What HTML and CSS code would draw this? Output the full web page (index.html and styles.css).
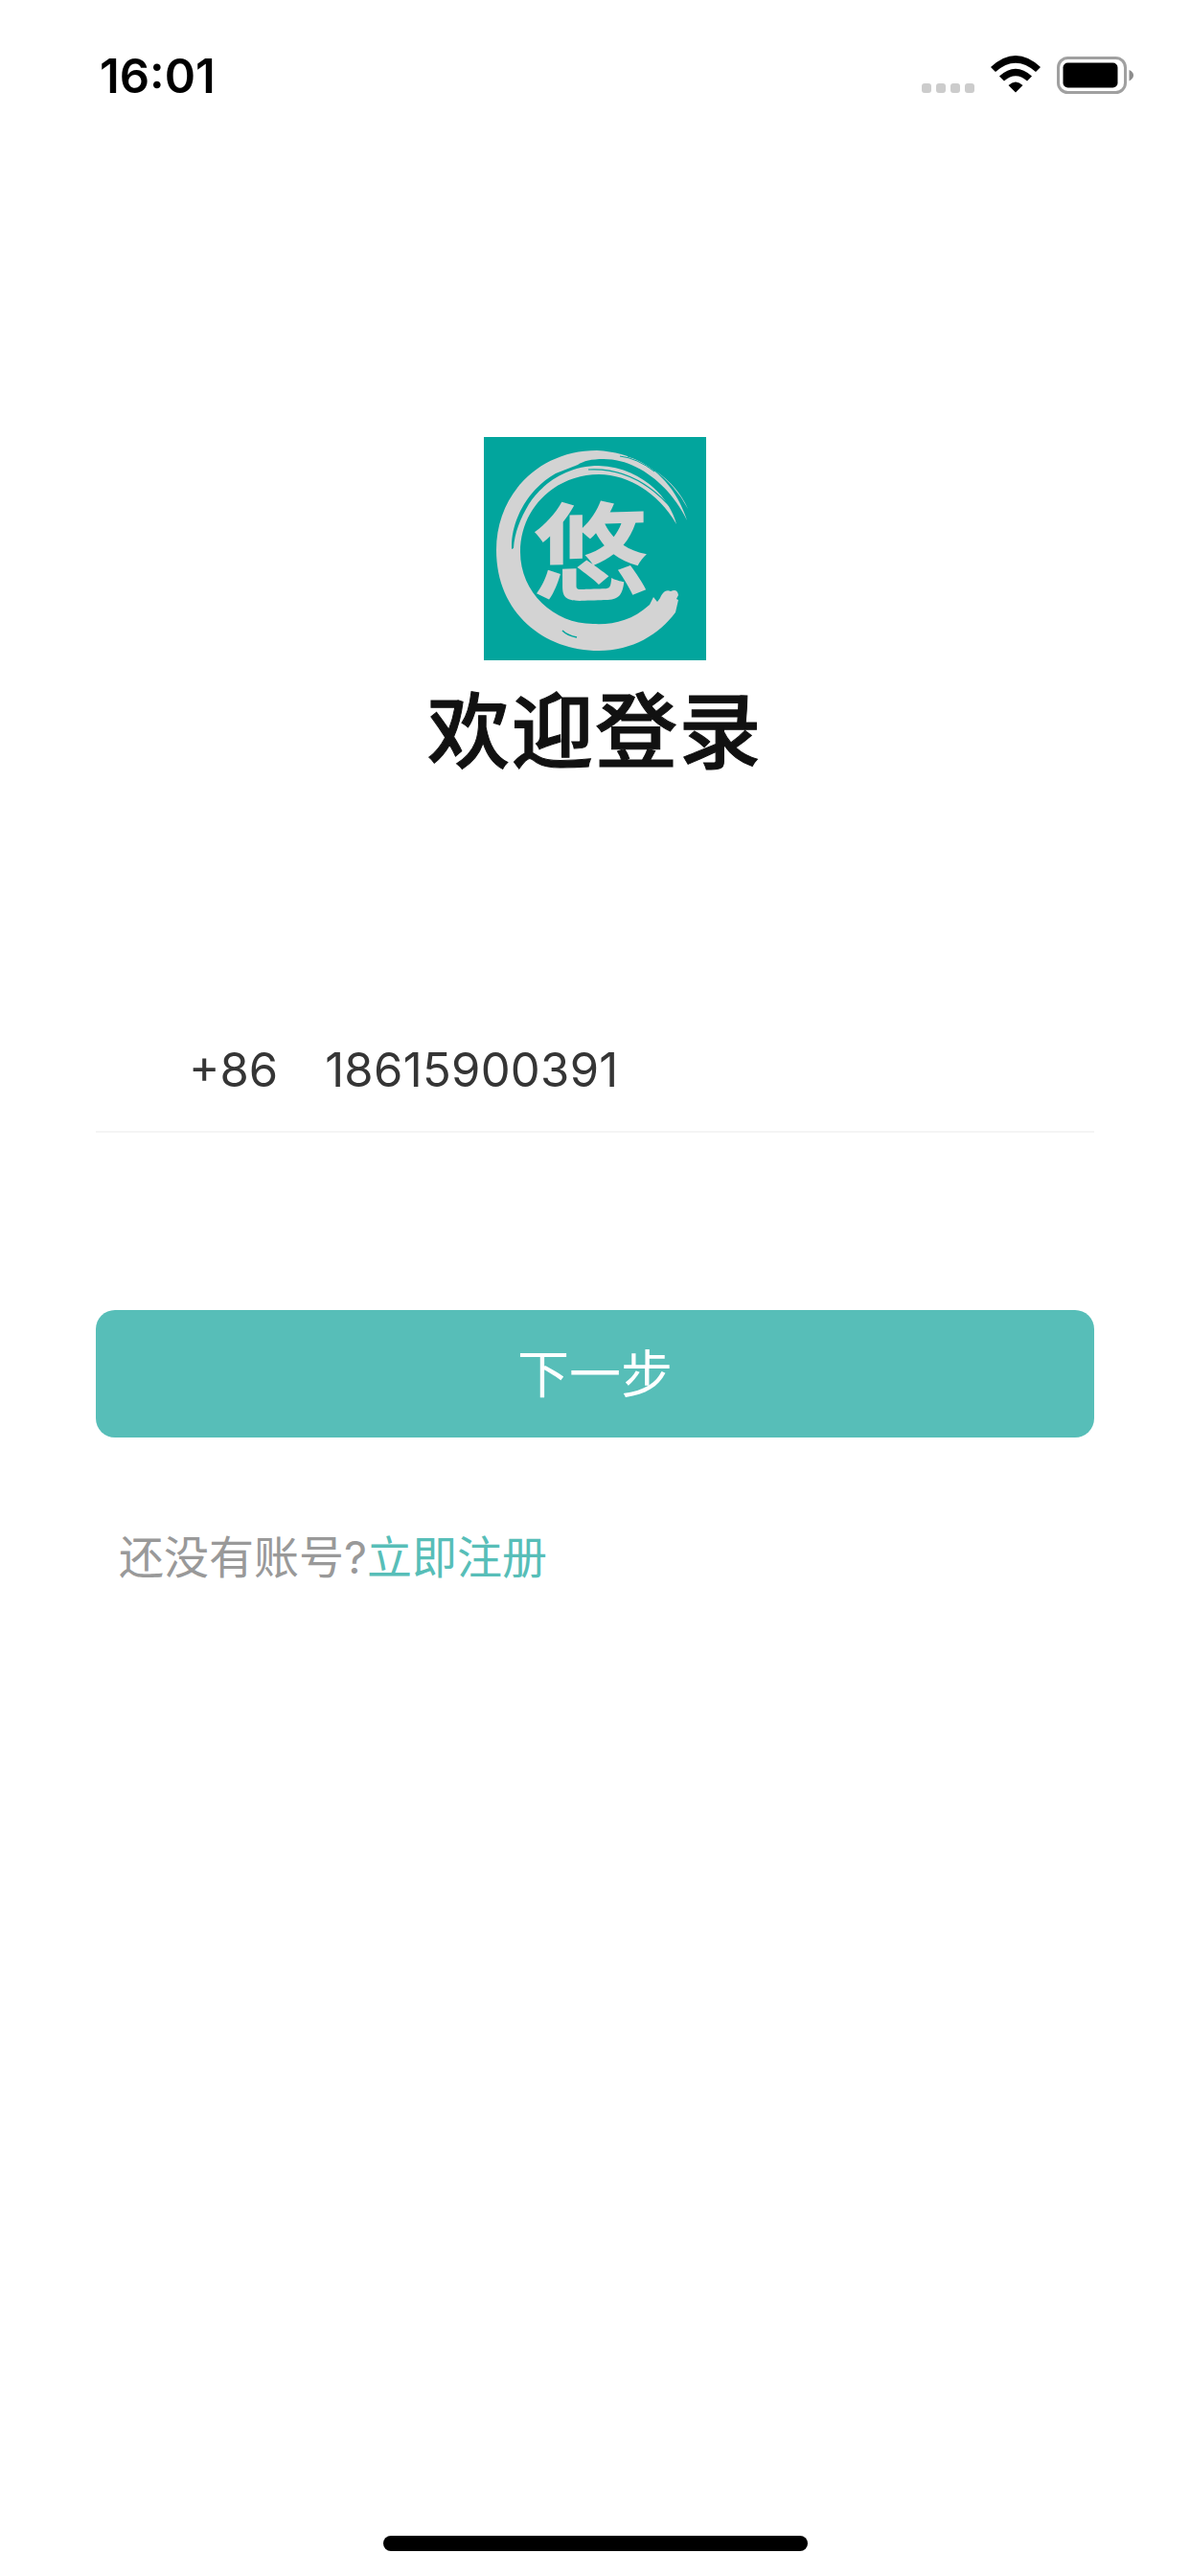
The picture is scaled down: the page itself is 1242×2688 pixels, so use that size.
FILE: index.html
```html
<!DOCTYPE html>
<html lang="zh-CN">
<head>
    <meta charset="UTF-8">
    <meta name="viewport" content="width=device-width, initial-scale=1.0">
    <title>欢迎登录</title>
    <link rel="stylesheet" href="styles.css">
</head>
<body>
    <div class="page">
        <header class="status-bar">
            <span class="time">16:01</span>
            <div class="status-icons">
                <div class="signal">
                    <i></i><i></i><i></i><i></i>
                </div>
                <svg class="wifi" width="52" height="39" viewBox="0 0 52 39">
                    <path d="M0 12Q26 -12 52 12L47 17Q26 -1.500 5 17Z"/>
                    <path d="M9 21.500Q26 6 43 21.500L38 26.500Q26 16 14 26.500Z"/>
                    <path d="M18.500 31Q26 24 33.500 31L26 38.500Z"/>
                </svg>
                <svg class="battery" width="82" height="40" viewBox="0 0 82 40">
                    <rect x="1.500" y="1.500" width="70" height="36" rx="10" fill="none" stroke="#a0a0a0" stroke-width="3"/>
                    <rect x="6.500" y="6.500" width="57" height="26" rx="5"/>
                    <path d="M75.500 14Q80 16 80 19.500T75.500 25.500Z" fill="#8c8c8c"/>
                </svg>
            </div>
        </header>

        <main class="login">
            <svg class="logo" width="232" height="233" viewBox="0 0 232 233">
                <rect width="232" height="233" fill="#02a59d"/>
                <!-- brush ring -->
                <g fill="#d3d3d3">
                    <path d="M212 87C200 50 172 17 118 14C57 14 13 60 13 118C13 184 63 223 120 223C155 223 183 206 200 183L203 170L201 169L203 165Q202 158 195 161C189 158 185 165 184 168L181 172L177 167L173 175C154 192 135 196 114 195C73 195 38 162 38 120C38 73 76 39 120 39C150 39 182 58 201 91C194 64 166 32 120 30C85 30 60 50 47 70C38 85 32 100 31 116L29 117C28 88 45 55 75 38L98 29C104 25 112 23 125 23C160 23 194 50 212 87Z"/>
                    <path d="M177 34Q200 50 213 75Q202 50 177 34Z"/>
                </g>
                <g fill="none" stroke="#02a59d">
                    <path d="M142 20Q160 22 178 36M150 20Q164 23 176 33" stroke-width="1"/>
                    <path d="M109 34Q160 31 199 78" stroke-width="1.200"/>
                    <path d="M82 202Q87 207 97 209" stroke-width="1.500"/>
                </g>
                <text class="logo-text" transform="translate(51 164) scale(1.08 1) skewY(-2)">悠</text>
            </svg>
            <h1 class="title">欢迎登录</h1>

            <form class="form">
                <div class="phone">
                    <span class="code">+86</span>
                    <span class="number">18615900391</span>
                </div>
                <button type="button" class="primary-button">下一步</button>
                <p class="register">还没有账号?<a class="link">立即注册</a></p>
            </form>
        </main>

        <div class="home-indicator"></div>
    </div>
</body>
</html>
```
FILE: styles.css
```css
:root {
  --green: #57beb8;
  --text: #353535;
  --gray: #999999;
}
* {
  box-sizing: border-box;
}
body {
  margin: 0;
  background-color: #ffffff;
  font-family: Inter, 'Noto Sans CJK SC', sans-serif;
}
.page {
  display: flex;
  flex-direction: column;
  align-items: center;
  width: 1242px;
  height: 2688px;
  padding-bottom: 26px;
}
.status-bar {
  display: flex;
  justify-content: space-between;
  width: 100%;
  height: 132px;
  padding: 50px 57px 0 104px;
}
.time {
  font-size: 49px;
  font-weight: 600;
  line-height: 60px;
}
.status-icons {
  display: flex;
  align-items: flex-start;
  padding-top: 8px;
}
.signal {
  display: flex;
  gap: 5px;
  margin: 29px 17px 0 0;
}
.signal i {
  width: 10px;
  height: 10px;
  border-radius: 3px;
  background-color: #cccccc;
}
.battery {
  margin: 1px 0 0 17px;
}
.login {
  display: flex;
  flex: 1;
  flex-direction: column;
  align-items: center;
  width: 1042px;
  padding-top: 324px;
}
.logo {
  display: block;
}
.logo-text {
  font-family: 'Noto Sans CJK SC', sans-serif;
  font-size: 112px;
  font-weight: 700;
  fill: #d3d3d3;
}
.title {
  margin: 9px 0 0;
  color: #111111;
  font-family: 'Noto Sans CJK SC', sans-serif;
  font-size: 86px;
  font-weight: 500;
  letter-spacing: 1.5px;
  line-height: 120px;
  -webkit-text-stroke: 1px #111111;
}
.form {
  width: 100%;
  margin-top: 234px;
}
.phone {
  display: flex;
  align-items: center;
  height: 130px;
  padding-left: 97px;
  border-bottom: 2px solid #f4f4f4;
  color: var(--text);
  font-size: 49px;
}
.number {
  margin-left: 49px;
  letter-spacing: 0.3px;
}
.primary-button {
  display: block;
  width: 100%;
  height: 133px;
  margin-top: 185px;
  padding-bottom: 8px;
  border: none;
  border-radius: 20px;
  background-color: var(--green);
  color: #ffffff;
  font-family: 'Noto Sans CJK SC', sans-serif;
  font-size: 54px;
  font-weight: 400;
}
.register {
  margin: 90px 0 0 24px;
  color: var(--gray);
  font-size: 47px;
  line-height: 70px;
}
.link {
  color: var(--green);
}
.home-indicator {
  width: 443px;
  height: 16px;
  border-radius: 8px;
  background-color: #000000;
}
```
